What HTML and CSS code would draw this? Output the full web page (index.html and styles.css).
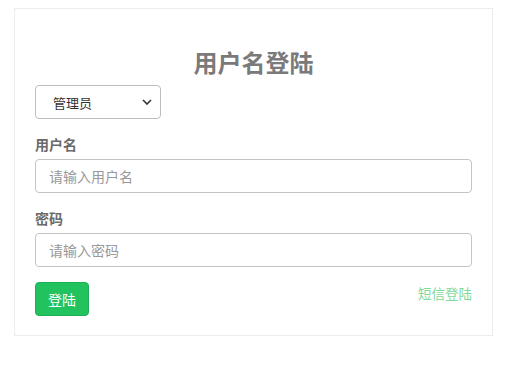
FILE: index.html
```html
<!DOCTYPE html>
<html lang="zh-CN">
<head>
    <meta charset="UTF-8">
    <meta name="viewport" content="width=device-width, initial-scale=1">
    <title>用户名登陆</title>
    <link rel="stylesheet" href="styles.css">
</head>
<body>

<div class="login-box">
    <h2 class="login-title">用户名登陆</h2>
    <select class="role-select">
        <option>管理员</option>
        <option>教师</option>
        <option>学生</option>
    </select>

    <form class="login-form">
        <div class="field">
            <label for="username">用户名</label>
            <input type="text" id="username" placeholder="请输入用户名">
        </div>
        <div class="field">
            <label for="password">密码</label>
            <input type="password" id="password" placeholder="请输入密码">
        </div>
        <div class="actions">
            <button type="button" class="btn-login">登陆</button>
            <a href="#" class="sms-link">短信登陆</a>
        </div>
    </form>
</div>

</body>
</html>
```

FILE: styles.css
```css
body {
    margin: 8px 26px 0 14px;
    font-family: "Noto Sans CJK SC", "Noto Sans", sans-serif;
    background-color: #ffffff;
}
.login-box {
    width: 437px;
    padding: 20px 20px 19px 20px;
    background-color: #ffffff;
    border: 1px solid #ececec;
    box-shadow: 10px 12px 20px rgba(0, 0, 0, 0.14);
}
.login-title {
    margin: 0 0 5px 0;
    padding-top: 15px;
    font-size: 24px;
    line-height: 36px;
    font-weight: bold;
    text-align: center;
    color: #7a7a7a;
}
.role-select {
    display: block;
    width: 126px;
    height: 34px;
    padding: 0 0 0 17px;
    font-family: inherit;
    font-size: 13px;
    color: #333;
    background: #fff url("data:image/svg+xml;utf8,<svg xmlns='http://www.w3.org/2000/svg' width='10' height='6' viewBox='0 0 10 6'><path d='M1 1l4 4 4-4' fill='none' stroke='%23333' stroke-width='1.6'/></svg>") no-repeat right 8px center;
    border: 1px solid #bdbdbd;
    border-radius: 4px;
    appearance: none;
    -webkit-appearance: none;
}
.login-form {
    margin-top: 15px;
}
.field {
    margin-bottom: 15px;
}
.field label {
    display: block;
    margin-bottom: 5px;
    font-size: 14px;
    line-height: 20px;
    font-weight: bold;
    color: #6a6a6a;
}
.field input {
    display: block;
    box-sizing: border-box;
    width: 100%;
    height: 34px;
    padding: 0 13px;
    font-family: inherit;
    font-size: 14px;
    border: 1px solid #c4c4c4;
    border-radius: 4px;
    outline: none;
}
.field input::placeholder {
    color: #999999;
}
.actions {
    display: flex;
    justify-content: space-between;
    align-items: flex-start;
}
.btn-login {
    width: 54px;
    height: 34px;
    padding: 0;
    font-family: inherit;
    font-size: 14px;
    color: #ffffff;
    background-color: #22c35e;
    border: 1px solid #1bb152;
    border-radius: 4px;
}
.sms-link {
    margin-top: 1px;
    font-size: 13.5px;
    line-height: 20px;
    color: #7fd99a;
    text-decoration: none;
}
```
